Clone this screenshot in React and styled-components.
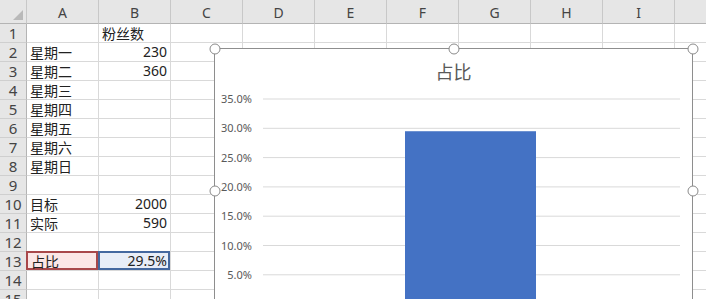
import React from "react";
import styled, { createGlobalStyle, css } from "styled-components";

const Global = createGlobalStyle`
  html, body { margin: 0; padding: 0; background: #fff; overflow: hidden; }
  body { font-family: "Noto Sans", "Noto Sans CJK SC", sans-serif; }
`;

const Page = styled.div`
  position: relative;
  width: 706px;
  height: 299px;
  overflow: hidden;
`;

const Sheet = styled.div`
  display: grid;
  grid-template-columns: 27px repeat(10, 72px);
  grid-template-rows: 24px repeat(15, 19px);
`;

const HeadCell = styled.div`
  box-sizing: border-box;
  background: #e6e6e6;
  border-right: 1px solid #c8c8c8;
  border-bottom: 1px solid #b4b4b4;
  color: #444;
  font-family: "Noto Sans", sans-serif;
  font-size: 14px;
  display: flex;
  align-items: center;
  justify-content: center;
  padding-top: 1px;
`;

const Corner = styled(HeadCell)`
  justify-content: flex-end;
  align-items: flex-end;
  padding: 0 3px 3px 0;
  &::after {
    content: "";
    width: 0;
    height: 0;
    border-left: 10px solid transparent;
    border-bottom: 10px solid #b9b9b9;
  }
`;

const RowHead = styled(HeadCell)`
  font-size: 15px;
  border-bottom: 1px solid #cfcfcf;
  border-right: 1px solid #b4b4b4;
  padding-top: 0;
`;

const marks = {
  red: css`
    background: #fbe6e6;
    box-shadow: inset 0 0 0 2px #a8474a;
  `,
  blue: css`
    background: #e8edf7;
    box-shadow: inset 0 0 0 2px #44689f;
  `,
};

const Cell = styled.div`
  box-sizing: border-box;
  border-right: 1px solid #d9d9d9;
  border-bottom: 1px solid #d9d9d9;
  color: #222;
  font-family: "Noto Sans CJK SC", "Noto Sans", sans-serif;
  font-size: 14px;
  line-height: 18px;
  display: flex;
  align-items: center;
  padding: 0 3px 0 3px;
  white-space: nowrap;
  justify-content: ${(p) => (p.$num ? "flex-end" : "flex-start")};
  ${(p) => p.$num && css`font-family: "Noto Sans", sans-serif;`}
  ${(p) => p.$mark && marks[p.$mark]}
  ${(p) => p.$mark && css`margin: -1px 0 0 -1px; padding-left: 5px;`}
`;

const Chart = styled.div`
  position: absolute;
  left: 214px;
  top: 48px;
  width: 479px;
  height: 286px;
  box-sizing: border-box;
  border: 1px solid #8e8e8e;
  background: #fff;
`;

const Title = styled.div`
  text-align: center;
  margin-top: 10px;
  font-family: "Noto Sans CJK SC", sans-serif;
  font-size: 18px;
  line-height: 24px;
  color: #595959;
`;

const Plot = styled.svg`
  position: absolute;
  left: 0;
  top: 0;
  overflow: visible;
`;

const Handle = styled.div`
  position: absolute;
  left: ${(p) => p.$x};
  top: ${(p) => p.$y};
  width: 11px;
  height: 11px;
  border-radius: 50%;
  background: #fff;
  border: 1.5px solid #8a8a8a;
  box-sizing: border-box;
  transform: translate(-50%, -50%);
`;

const cols = ["A", "B", "C", "D", "E", "F", "G", "H", "I", "J"];

const data = {
  1: { B: { t: "粉丝数" } },
  2: { A: { t: "星期一" }, B: { t: "230", num: true } },
  3: { A: { t: "星期二" }, B: { t: "360", num: true } },
  4: { A: { t: "星期三" } },
  5: { A: { t: "星期四" } },
  6: { A: { t: "星期五" } },
  7: { A: { t: "星期六" } },
  8: { A: { t: "星期日" } },
  10: { A: { t: "目标" }, B: { t: "2000", num: true } },
  11: { A: { t: "实际" }, B: { t: "590", num: true } },
  13: { A: { t: "占比", mark: "red" }, B: { t: "29.5%", num: true, mark: "blue" } },
};

const ticks = ["35.0%", "30.0%", "25.0%", "20.0%", "15.0%", "10.0%", "5.0%", "0.0%"];
const y0 = 50;
const step = 29.3;

const handles = [
  ["-0.5px", "-0.5px"],
  ["50%", "-0.5px"],
  ["calc(100% + 0.5px)", "-0.5px"],
  ["-0.5px", "50%"],
  ["calc(100% + 0.5px)", "50%"],
];

export default function App() {
  const rows = [];
  for (let r = 1; r <= 15; r++) {
    rows.push(<RowHead key={`h${r}`}>{r}</RowHead>);
    cols.forEach((c) => {
      const d = (data[r] && data[r][c]) || {};
      rows.push(
        <Cell key={`${c}${r}`} $num={d.num} $mark={d.mark}>
          {d.t || ""}
        </Cell>
      );
    });
  }
  const zeroY = y0 + step * 7;
  const barTop = zeroY - (29.5 / 5) * step;
  return (
    <Page>
      <Global />
      <Sheet>
        <Corner />
        {cols.map((c) => (
          <HeadCell key={c}>{c}</HeadCell>
        ))}
        {rows}
      </Sheet>
      <Chart>
        <Title>占比</Title>
        <Plot width="477" height="284">
          {ticks.map((t, i) => {
            const y = y0 + i * step;
            return (
              <g key={t}>
                <line x1="48" x2="465" y1={y} y2={y} stroke="#d9d9d9" strokeWidth="1" />
                <text
                  x="37"
                  y={y + 4}
                  textAnchor="end"
                  fontSize="11"
                  fill="#595959"
                  fontFamily="Noto Sans, sans-serif"
                >
                  {t}
                </text>
              </g>
            );
          })}
          <rect x="190" y={barTop} width="131" height={zeroY - barTop} fill="#4472c4" />
        </Plot>
        {handles.map(([x, y], i) => (
          <Handle key={i} $x={x} $y={y} />
        ))}
      </Chart>
    </Page>
  );
}
